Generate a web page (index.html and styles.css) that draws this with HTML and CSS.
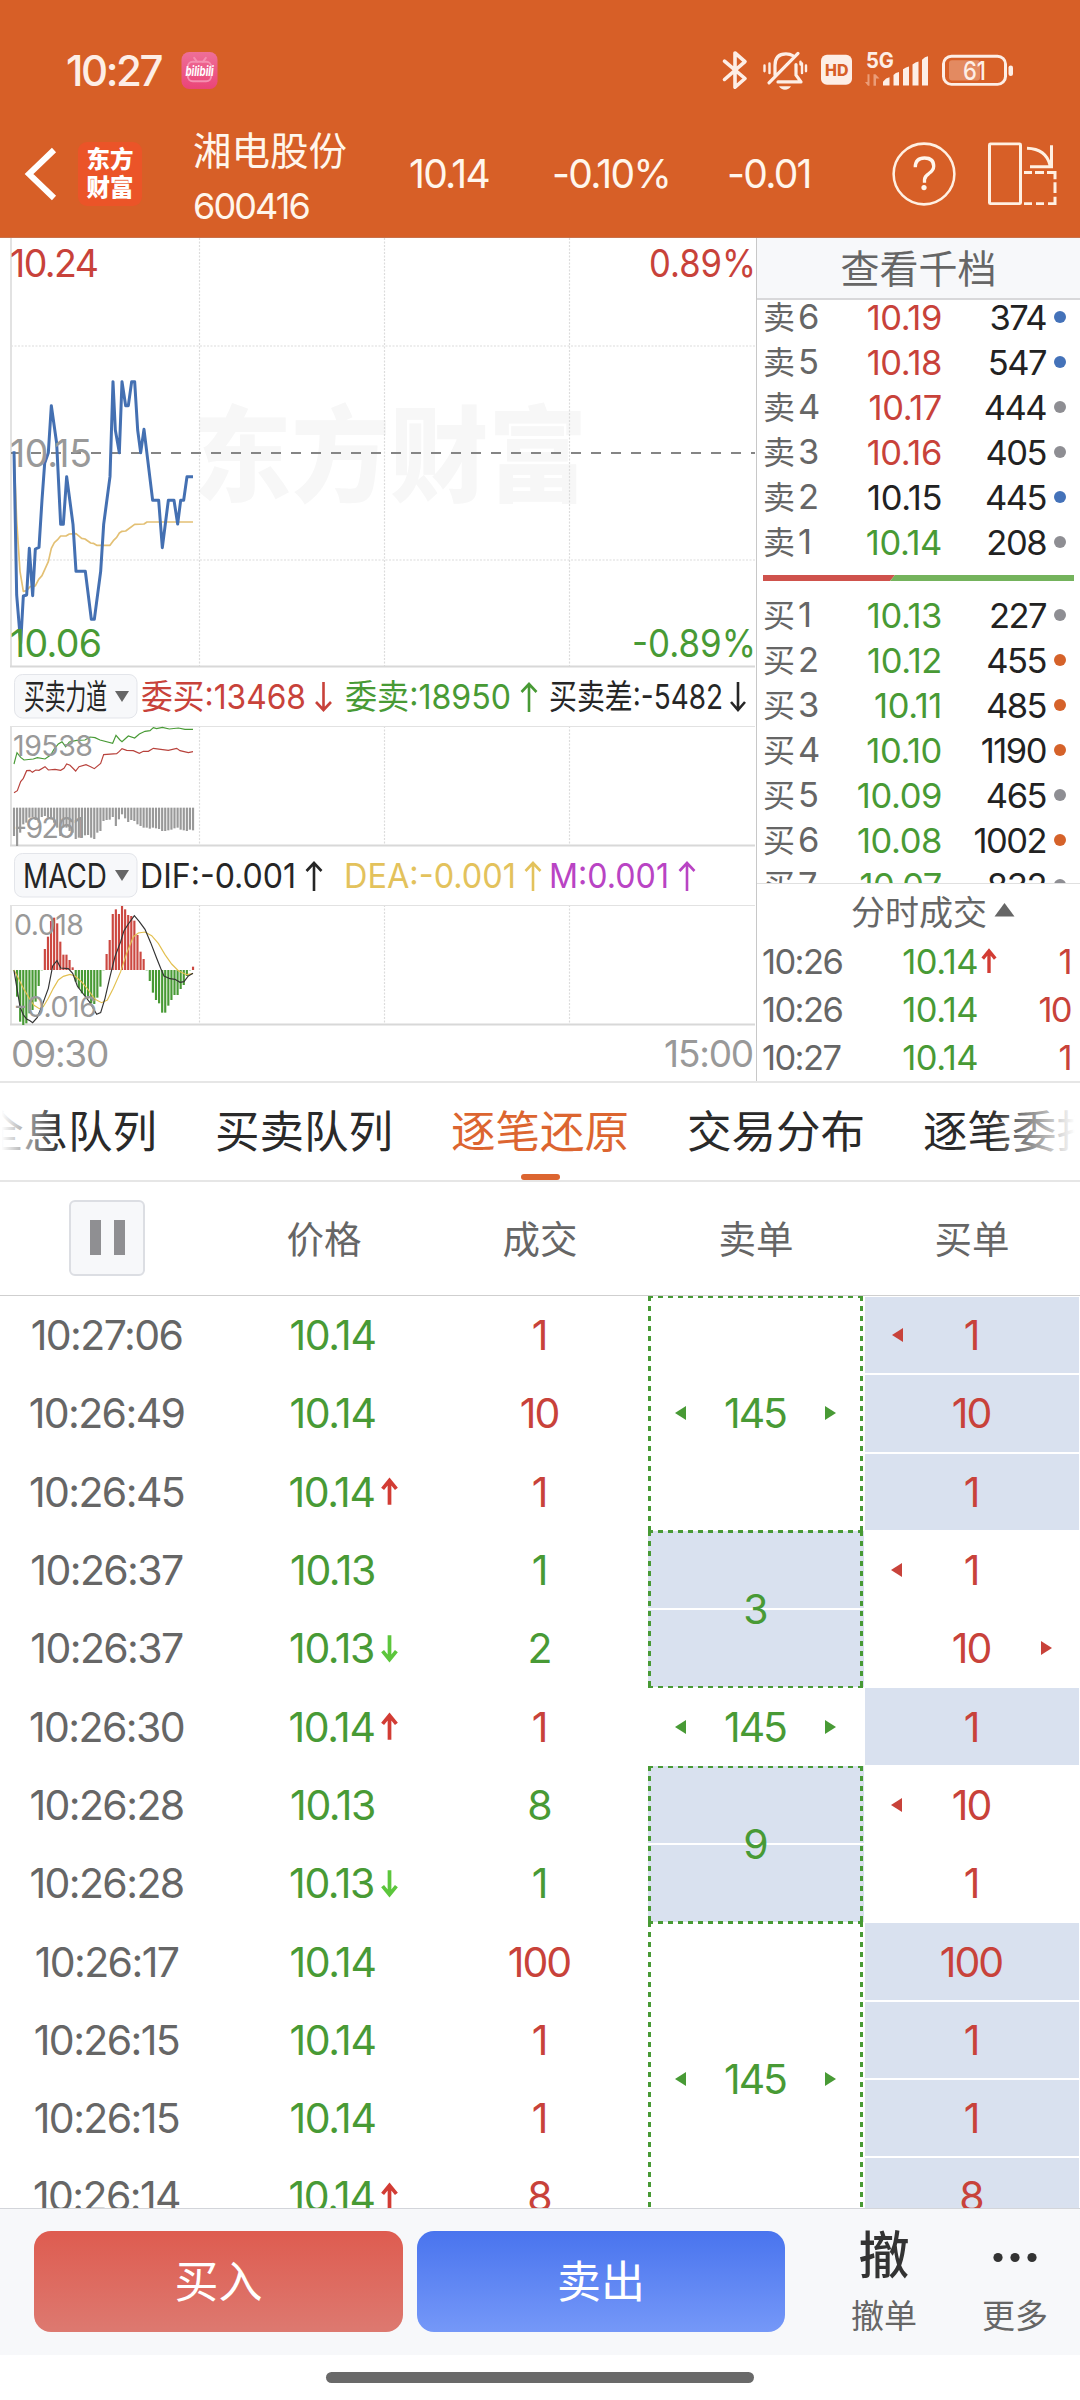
FILE: index.html
```
<!DOCTYPE html>
<html lang="zh-CN">
<head>
    <meta charset="UTF-8">
    <meta name="viewport" content="width=device-width, initial-scale=1.0">
    <title>湘电股份 600416</title>
    <link rel="stylesheet" href="styles.css">
</head>
<body>
    <header class="top">
        <div class="status-bar">
            <span class="clock">10:27</span>
            <svg class="app-badge" width="38" height="37" viewBox="0 0 38 38">
                <defs>
                    <linearGradient id="pink" x1="0" y1="0" x2="0" y2="1">
                        <stop offset="0" stop-color="#ee6f98"/>
                        <stop offset="1" stop-color="#ea4478"/>
                    </linearGradient>
                </defs>
                <rect width="37" height="38" rx="8" fill="url(#pink)"/>
                <g fill="none" stroke="#f58fb0" stroke-width="2" stroke-linecap="round">
                    <rect x="6.500" y="10" width="24" height="20" rx="5"/>
                    <path d="M13 6l3 4M25 6l-3 4"/>
                </g>
                <text x="4" y="25" textLength="29" lengthAdjust="spacingAndGlyphs" class="bili">bilibili</text>
            </svg>
            <svg class="status-icons" width="295" height="42.600" viewBox="720 50 295 44" preserveAspectRatio="none">
                <g fill="none" stroke="#fdeee6" stroke-width="3.600" stroke-linecap="round" stroke-linejoin="round">
                    <path d="M724.500 62.500L745 80.500L735 89.500V54L745 63L724.500 81.500"/>
                    <path d="M775 77V67q0-12 11-12q4 0 7 2M769 85L798 54.500M778 84H801L796 77V66" stroke-width="3.200"/>
                    <path d="M764.500 67v6M769.500 65v10M802 65v10M806 67v6M800.500 63v3" stroke-width="2.400"/>
                </g>
                <path d="M779 88.500h12q-2 3.500-6 3.500t-6-3.500z" fill="#fdeee6"/>
                <rect x="821" y="56" width="31" height="31" rx="6" fill="#fdeee6"/>
                <text x="825" y="77.500" textLength="23.500" lengthAdjust="spacingAndGlyphs" class="hd">HD</text>
                <text x="866" y="70" textLength="28" lengthAdjust="spacingAndGlyphs" class="net">5G</text>
                <path d="M869.500 76v12h-1.500l-3-4h2.500v-8zM873.500 88V76h2l4 4.500h-3.500V88z" fill="#eb9d78"/>
                <path d="M883 87.800v-4q3-4 6.500-4.500v8.500zM893.500 87.800v-11q2-2.500 5.500-3v14zM903 87.800V71q3-2.500 6-3v19.800zM912.500 87.800V66q3-2.500 6-3v24.800zM922 87.800V61q3-3 6-3.500v30.300z" fill="#fdeee6"/>
                <rect x="943.500" y="57.500" width="62" height="29" rx="8" fill="none" stroke="#fdeee6" stroke-width="3"/>
                <rect x="949" y="61.500" width="31" height="21" rx="3" fill="#e38a61"/>
                <rect x="1008.500" y="67" width="4.500" height="11" rx="2.200" fill="#fdeee6"/>
                <text x="963" y="82" textLength="23" lengthAdjust="spacingAndGlyphs" class="battery">61</text>
            </svg>
        </div>
        <div class="nav">
            <svg class="back" width="34" height="58" viewBox="0 0 34 58">
                <path d="M30 5L5 29L30 53" fill="none" stroke="#fff" stroke-width="6"/>
            </svg>
            <div class="logo">东方<br>财富</div>
            <div class="stock">
                <div class="stock-name">湘电股份</div>
                <div class="stock-code">600416</div>
            </div>
            <span class="quote last">10.14</span>
            <span class="quote percent">-0.10%</span>
            <span class="quote change">-0.01</span>
            <svg class="help" width="66" height="66" viewBox="0 0 66 68">
                <circle cx="33" cy="34" r="31.300" fill="none" stroke="#fff0e2" stroke-width="2.600"/>
                <path d="M24 27q0-9.500 9.500-9.500t9.500 8.500q0 4-5 7.500q-4.500 3-4.500 6.500v3" fill="none" stroke="#fff6ec" stroke-width="3.400"/>
                <circle cx="33" cy="48" r="2.700" fill="#fff6ec"/>
            </svg>
            <svg class="rotate" width="70" height="66" viewBox="987 145 70 68" preserveAspectRatio="none">
                <g fill="none" stroke="#fff0e2" stroke-width="3">
                    <rect x="989.500" y="148" width="31" height="61.500" rx="1"/>
                    <path d="M1027 152.500Q1046 153 1050 170M1051.500 149.500V171.500H1030"/>
                    <path d="M1024 177.500h8m3 0h9m3 0h8v7m0 3v11m0 4v7h-7m-4 0h-8m-4 0h-8"/>
                </g>
            </svg>
        </div>
    </header>

    <main class="quote-area">
        <section class="charts">
            <svg class="price-chart" width="757" height="430" viewBox="0 0 757 430">
                <text x="193" y="256" textLength="394" lengthAdjust="spacingAndGlyphs" class="watermark">东方财富</text>
                <path class="grid" d="M11 108H755M11 322H755M199.500 0V429M384.500 0V429M569.500 0V429"/>
                <path class="frame" d="M11 0V429"/>
                <path class="frame-bottom" d="M10 428.500H755"/>
                <path d="M11 215H755" stroke="#858585" stroke-width="2" stroke-dasharray="10 10"/>
                <g transform="translate(0 -8) scale(.33333)" fill="none" stroke-linejoin="round">
                    <path stroke="#e3c074" stroke-width="5" d="M42 668L50 870L60 1024L70 1084L80 1082L90 1070L106 1068L116 1048L126 1037L145 995L154 955L163 938L172 930L182 918L198 918L208 912L228 911L245 925L255 927L272 939L280 940L290 946L330 946L340 932L350 922L358 909L366 904L377 903L404 883L432 882L441 876H579"/>
                    <path stroke="#4470b2" stroke-width="9" d="M42 664L50 1095L62 1240L70 1098L80 1095L88 955L98 1097L106 957L117 952L126 810L134 700L145 668L154 527L170 640L182 883H190L200 740L219 883L228 1024H256L274 1168H283L302 1024L311 883L330 740L339 455L346 600L358 668L366 455L377 527H385L395 455H404L413 600L422 668L432 598L458 811H476L487 953L505 811H522L533 882L542 811H551L561 740H579"/>
                </g>
                <g class="axis">
                    <text x="10" y="39" textLength="89" class="up">10.24</text>
                    <text x="649" y="39" textLength="107" lengthAdjust="spacingAndGlyphs" class="up">0.89%</text>
                    <text x="10" y="229" textLength="82" class="muted">10.15</text>
                    <text x="10" y="419" textLength="92" class="down">10.06</text>
                    <text x="632" y="419" textLength="124" lengthAdjust="spacingAndGlyphs" class="down">-0.89%</text>
                </g>
            </svg>

            <svg class="indicator" width="757" height="58" viewBox="0 0 757 58">
                <rect x="14.500" y="6.500" width="122.500" height="43.500" rx="8" class="picker"/>
                <text x="24" y="41" textLength="83" lengthAdjust="spacingAndGlyphs" class="dark">买卖力道</text>
                <path d="M115 23h14l-7 11z" fill="#666"/>
                <text x="141" y="41" textLength="165" lengthAdjust="spacingAndGlyphs" class="up">委买:13468</text>
                <path class="arrow red" d="M323.500 14V42M316 34l7.500 8l7.500-8"/>
                <text x="345" y="41" textLength="166" lengthAdjust="spacingAndGlyphs" class="down">委卖:18950</text>
                <path class="arrow green" d="M529 44V16M521.500 24l7.500-8l7.500 8"/>
                <text x="549" y="41" textLength="174" lengthAdjust="spacingAndGlyphs" class="dark">买卖差:-5482</text>
                <path class="arrow" d="M738 14V42M731 34l7 8l7-8"/>
            </svg>

            <svg class="sub-chart" width="757" height="121" viewBox="0 0 757 121">
                <path class="grid" d="M199.500 0V119M384.500 0V119M569.500 0V119"/>
                <path class="frame thin" d="M11 .500H755"/>
                <path class="frame" d="M11 0V120"/>
                <path class="frame-bottom" d="M10 119.500H755"/>
                <g transform="translate(0 -66) scale(.33333)" fill="none">
                    <g id="force-bars"></g>
                    <path stroke="#489a35" stroke-width="3.500" d="M42 312L51 278L62 292L72 300L100 297L112 293L135 297L152 285L162 268L175 252L186 245L197 260L208 246L230 241L255 240L270 231L285 233L300 240L338 250L348 226L360 240L366 245L385 228L404 234L418 222L435 214L450 212L460 203L470 206L487 202L508 207L535 204L555 208H579"/>
                    <path stroke="#b8423c" stroke-width="3.500" d="M42 398L52 392L62 365L70 355L80 332L90 331L97 337L107 330L117 331L135 320L145 330L165 328L182 331L192 325L200 312L210 316L227 333L237 320L258 314L272 320L283 326L302 310L311 284L350 281L358 274L366 266L380 271L400 272L418 280L430 274L445 274L460 265L505 271L530 265L540 272L565 278L579 275"/>
                </g>
                <g class="axis small">
                    <text x="13" y="30" textLength="80" class="muted">19538</text>
                    <text x="14" y="112" textLength="71" class="muted">-9261</text>
                </g>
            </svg>

            <svg class="indicator" width="757" height="58" viewBox="0 0 757 58">
                <rect x="14.500" y="6.500" width="122.500" height="43.500" rx="8" class="picker"/>
                <text x="23" y="41" textLength="84" lengthAdjust="spacingAndGlyphs" class="dark">MACD</text>
                <path d="M115 23h14l-7 11z" fill="#666"/>
                <text x="140" y="41" textLength="156" lengthAdjust="spacingAndGlyphs" class="dark">DIF:-0.001</text>
                <path class="arrow" d="M314 44V16M306.500 24l7.500-8l7.500 8"/>
                <text x="344" y="41" textLength="172" lengthAdjust="spacingAndGlyphs" class="gold">DEA:-0.001</text>
                <path class="arrow yellow" d="M533 44V16M525.500 24l7.500-8l7.500 8"/>
                <text x="549" y="41" textLength="120" lengthAdjust="spacingAndGlyphs" class="purple">M:0.001</text>
                <path class="arrow violet" d="M687 44V16M679.500 24l7.500-8l7.500 8"/>
            </svg>

            <svg class="sub-chart" width="757" height="121" viewBox="0 0 757 121">
                <path class="grid" d="M199.500 0V119M384.500 0V119M569.500 0V119"/>
                <path class="frame thin" d="M11 .500H755"/>
                <path class="frame" d="M11 0V120"/>
                <path class="frame-bottom" d="M10 119.500H755"/>
                <g transform="translate(0 -245) scale(.33333)" fill="none">
                    <g id="macd-bars"></g>
                    <path stroke="#e3c050" stroke-width="3.500" d="M42 930L55 955L70 985L88 1015L102 1036L118 1046L130 1040L145 1015L160 985L175 960L190 949L210 943L225 948L245 966L265 990L285 1018L305 1028L322 1020L340 985L362 935L380 880L400 830L415 819L435 816L455 827L475 850L495 884L515 912L535 932L560 944L579 941"/>
                    <path stroke="#333" stroke-width="3.500" d="M42 932L50 980L60 1040L70 1065L80 1077L90 1082L98 1088L112 1072L125 1040L145 985L158 918L171 902L182 924L205 926L218 940L232 978L250 1002L270 1028L290 1063L302 1058L315 1015L330 950L345 890L362 845L372 812L385 792L403 767L418 785L435 808L452 848L470 895L482 925L492 948L510 956L525 958L540 967L552 965L565 948L579 940"/>
                </g>
                <g class="axis small">
                    <text x="14" y="30" textLength="70" class="muted">0.018</text>
                    <text x="14" y="112" textLength="83" class="muted">-0.016</text>
                </g>
            </svg>
            <div class="time-axis"><span>09:30</span><span>15:00</span></div>
        </section>

        <aside class="order-book">
            <div class="book-title">查看千档</div>
            <div class="levels">
                <div id="asks" class="level-group"></div>
                <svg class="ratio" width="311" height="6" viewBox="0 0 311 6">
                    <path d="M0 0H132L127 6H0z" fill="#cf524c"/>
                    <path d="M132 0H311V6H127z" fill="#74b35c"/>
                </svg>
                <div id="bids" class="level-group"></div>
            </div>
            <div class="ticks">
                <div class="ticks-title">分时成交<svg width="21" height="15" viewBox="0 0 21 15"><path d="M10.500 0L20.500 13.500H.500z" fill="#666"/></svg></div>
                <div id="ticks"></div>
            </div>
        </aside>
    </main>

    <nav class="tabs">
        <span class="tab">全息队列</span>
        <span class="tab">买卖队列</span>
        <span class="tab active">逐笔还原</span>
        <span class="tab">交易分布</span>
        <span class="tab">逐笔委托</span>
    </nav>

    <section class="trades">
        <div class="trades-head">
            <button class="pause" type="button"><i></i><i></i></button>
            <span>价格</span>
            <span>成交</span>
            <span>卖单</span>
            <span>买单</span>
        </div>
        <div class="trades-body" id="trades"></div>
    </section>

    <footer class="bottom">
        <button class="trade-btn buy" type="button">买入</button>
        <button class="trade-btn sell" type="button">卖出</button>
        <div class="action"><b>撤</b><span>撤单</span></div>
        <div class="action more">
            <svg width="44" height="50" viewBox="0 0 44 50"><g fill="#333"><circle cx="5" cy="25" r="4.600"/><circle cx="22" cy="25" r="4.600"/><circle cx="39" cy="25" r="4.600"/></g></svg>
            <span>更多</span>
        </div>
    </footer>
    <div class="home-bar"><i></i></div>

    <script src="script.js"></script>
</body>
</html>
```
FILE: styles.css
```
* {
    box-sizing: border-box;
}

body {
    margin: 0;
    width: 1080px;
    height: 2400px;
    display: flex;
    flex-direction: column;
    overflow: hidden;
    background-color: #fff;
    color: #222;
    font-family: Inter, "Noto Sans CJK SC", sans-serif;
}

svg {
    display: block;
    flex: none;
}

button {
    border: none;
    padding: 0;
    font-family: inherit;
}

.up { color: #c8423a; fill: #c8423a; }
.down { color: #489a35; fill: #489a35; }
.muted { color: #999; fill: #999; }
.dark { color: #262626; fill: #262626; }
.gold { fill: #e3c25c; }
.purple { fill: #b944c4; }

/* header */
.top {
    height: 238px;
    flex: none;
    background-color: #d75f27;
    border-bottom: 1px solid #c9714a;
    color: #fff6ec;
}

.status-bar {
    height: 120px;
    padding: 20px 65px 0 66px;
    display: flex;
    align-items: center;
}

.clock {
    width: 115px;
    font-size: 42px;
    font-weight: 500;
    letter-spacing: -2.4px;
    color: #fdeee6;
}

.status-icons {
    margin-left: auto;
}

.bili {
    font: italic 700 14px Inter, sans-serif;
    fill: #fff;
}

.hd {
    font: 800 16px Inter, sans-serif;
    fill: #d75f27;
}

.net {
    font: 700 22px Inter, sans-serif;
    fill: #fdeee6;
}

.battery {
    font: 500 27px Inter, sans-serif;
    fill: #fdeee6;
}

.nav {
    height: 107px;
    display: flex;
    align-items: center;
    padding-left: 24px;
}

.logo {
    width: 64px;
    height: 64px;
    margin-left: 20px;
    padding-top: 4px;
    border-radius: 9px;
    background-color: #eb5428;
    color: #fff;
    font-size: 23.500px;
    font-weight: 900;
    line-height: 28px;
    text-align: center;
}

.stock {
    width: 216px;
    margin: 8px 0 0 51px;
    white-space: nowrap;
}

.stock-name {
    font-size: 38.500px;
    line-height: 57px;
}

.stock-code {
    font-size: 36px;
    line-height: 53px;
    letter-spacing: -1.9px;
}

.quote {
    font-size: 39px;
    letter-spacing: -1.7px;
}

.last { width: 143px; }
.percent { width: 175px; }
.change { width: 164px; }

.rotate {
    margin-left: 30px;
}

/* charts */
.quote-area {
    height: 845px;
    flex: none;
    display: flex;
    border-bottom: 2px solid #e6e6e6;
}

.charts {
    width: 756px;
    display: flex;
    flex-direction: column;
    overflow: hidden;
}

.watermark {
    font-size: 104px;
    font-weight: 900;
    fill: #f7f7f7;
}

.grid {
    stroke: #dcdcdc;
    stroke-width: 1.200;
    stroke-dasharray: 2 1.500;
    fill: none;
}

.frame {
    stroke: #e2e2e2;
    stroke-width: 2;
}

.frame.thin {
    stroke-width: 1;
}

.frame-bottom {
    stroke: #d8d8d8;
    stroke-width: 2;
}

.axis {
    font-size: 37.500px;
}

.axis.small {
    font-size: 28.500px;
}

.indicator {
    font-size: 34px;
}

.picker {
    fill: #f7f8fa;
    stroke: #e3e5ea;
}

.arrow {
    fill: none;
    stroke: #262626;
    stroke-width: 2.600;
}

.arrow.red { stroke: #c8423a; }
.arrow.green { stroke: #489a35; }
.arrow.yellow { stroke: #e3c25c; }
.arrow.violet { stroke: #b944c4; }

.time-axis {
    display: flex;
    justify-content: space-between;
    padding: 1px 3px 0 11px;
    font-size: 37px;
    line-height: 54px;
    letter-spacing: -1.2px;
    color: #999;
}

/* order book */
.order-book {
    width: 324px;
    border-left: 1px solid #c8c8c8;
    display: flex;
    flex-direction: column;
}

.book-title {
    height: 62px;
    border-bottom: 2px solid #d8d8da;
    background-color: #f7f8fa;
    color: #666;
    font-size: 39px;
    line-height: 62px;
    text-align: center;
}

.levels {
    height: 586px;
    overflow: hidden;
    border-bottom: 1px solid #e0e0e0;
    display: flex;
    flex-direction: column;
}

.level-group {
    flex: none;
}

#asks {
    margin-top: -6px;
}

.ratio {
    margin: 11px 0 11px 6px;
}

.level {
    height: 45px;
    display: grid;
    grid-template-columns: 71px 108px 104px 12px;
    align-items: center;
    padding-left: 6px;
    font-size: 34.500px;
    line-height: 45px;
    letter-spacing: -1.5px;
    text-align: right;
}

.level .name {
    text-align: left;
    font-size: 32px;
    letter-spacing: 0;
    color: #666;
}

.level .name em {
    font-style: normal;
    font-size: 34.500px;
    margin-left: 3px;
}

.level .price {
    letter-spacing: -.4px;
}

.dot {
    width: 12px;
    height: 12px;
    margin-left: 8px;
    border-radius: 50%;
    background-color: #8e8e93;
}

.dot.big-sell { background-color: #4472b9; }
.dot.big-buy { background-color: #d5622a; }

.ticks-title {
    height: 52px;
    display: flex;
    align-items: center;
    justify-content: center;
    padding-left: 29px;
    font-size: 34px;
    color: #666;
}

.ticks-title svg {
    margin-left: 7px;
}

.ticks {
    padding-bottom: 1px;
}

.tick {
    height: 48px;
    display: grid;
    grid-template-columns: 90px 126px 26px 67px;
    align-items: center;
    padding-left: 5px;
    padding-top: 2px;
    font-size: 34.500px;
    letter-spacing: -1.6px;
    text-align: right;
}

.tick .time {
    text-align: left;
    color: #666;
}

.tick .down {
    letter-spacing: -.5px;
}

.tick svg {
    margin-left: 2px;
}

/* tabs */
.tabs {
    position: relative;
    height: 99px;
    flex: none;
    display: flex;
    gap: 58px;
    margin-left: -21px;
    border-bottom: 2px solid #e6e6e6;
    overflow: hidden;
    color: #2a2a2a;
}

.tab {
    position: relative;
    width: 178px;
    flex: none;
    font-size: 44.500px;
    line-height: 99px;
    white-space: nowrap;
}

.tab.active {
    color: #dc6530;
}

.tab.active::after {
    content: "";
    position: absolute;
    left: 70px;
    bottom: 0;
    width: 39px;
    height: 6px;
    border-radius: 3px;
    background-color: #dc6530;
}

.tabs::before,
.tabs::after {
    content: "";
    position: absolute;
    top: 0;
    bottom: 0;
    width: 70px;
    z-index: 1;
}

.tabs::before {
    left: 12px;
    background: linear-gradient(to right, #fff 15%, rgba(255, 255, 255, 0));
}

.tabs::after {
    right: 0;
    width: 90px;
    background: linear-gradient(to left, #fff 5%, rgba(255, 255, 255, 0));
}

/* trades */
.trades {
    height: 1026px;
    flex: none;
    overflow: hidden;
}

.trades-head {
    height: 114px;
    display: grid;
    grid-template-columns: repeat(5, 216px);
    align-items: center;
    justify-items: center;
    padding-bottom: 4px;
    border-bottom: 1px solid #cfcfcf;
    font-size: 37.500px;
    color: #666;
}

.pause {
    width: 76px;
    height: 76px;
    margin: 2px 2px 0 0;
    display: flex;
    align-items: center;
    justify-content: center;
    gap: 13px;
    border: 2px solid #dcdee3;
    border-radius: 6px;
    background-color: #f7f8fa;
}

.pause i {
    width: 11px;
    height: 35px;
    background-color: #8f8f92;
}

.trades-body {
    display: grid;
    grid-template-columns: repeat(5, 216px);
    grid-auto-rows: 78.300px;
    font-size: 41px;
    letter-spacing: -2px;
}

.cell {
    position: relative;
    display: flex;
    align-items: center;
    justify-content: center;
    grid-column: 1;
    padding-right: 2px;
}

.cell.time {
    color: #666;
    padding-right: 3px;
    letter-spacing: -1.600px;
}

.cell.price {
    grid-column: 2;
    padding: 0 0 0 17px;
    letter-spacing: -1.400px;
}

.cell.volume { grid-column: 3; }
.cell.ask { grid-column: 4; }
.cell.bid { grid-column: 5; }

.price svg {
    margin: 0 -22px 0 7px;
}

.bid.shade {
    margin: 1px;
    background-color: #d9e1ef;
}

.ask.shade {
    background: linear-gradient(#fff, #fff) 0 50% / 100% 2px no-repeat #d9e1ef;
}

/* dashed frame round one merged sell order */
.ask.boxed::after {
    content: "";
    position: absolute;
    inset: 0 1px -1px 0;
    background:
        repeating-linear-gradient(to right, #489a35 0 5px, transparent 5px 10px) 0 0 / 100% 2px no-repeat,
        repeating-linear-gradient(to right, #489a35 0 5px, transparent 5px 10px) 0 100% / 100% 2px no-repeat,
        repeating-linear-gradient(to bottom, #489a35 0 5px, transparent 5px 10px) 0 0 / 3px 100% no-repeat,
        repeating-linear-gradient(to bottom, #489a35 0 5px, transparent 5px 10px) 100% 0 / 3px 100% no-repeat;
}

.mark {
    position: absolute;
    top: 50%;
    margin-top: -7px;
    border: 7.500px solid transparent;
}

.mark.left {
    left: 27px;
    border-right: 11px solid currentColor;
    border-left: none;
}

.mark.right {
    right: 28px;
    border-left: 11px solid currentColor;
    border-right: none;
}

/* footer */
.bottom {
    height: 147px;
    flex: none;
    display: flex;
    align-items: flex-start;
    padding: 22px 0 0 34px;
    border-top: 1px solid #d3d5da;
    background-color: #f7f8fa;
}

.trade-btn {
    width: 369px;
    height: 101px;
    margin-right: 14px;
    border-radius: 17px;
    color: #fff;
    font-size: 44px;
    line-height: 98px;
}

.trade-btn.buy { background: linear-gradient(#de5c50, #dd7970); }
.trade-btn.sell { width: 368px; background: linear-gradient(#4974ee, #7598f8); }

.action {
    width: 130px;
    margin-left: 20px;
    display: flex;
    flex-direction: column;
    align-items: center;
    color: #666;
    font-size: 33px;
}

.action b {
    height: 53px;
    font-size: 51px;
    font-weight: 500;
    line-height: 50px;
    color: #333;
}

.action span {
    line-height: 64px;
}

.action.more {
    margin-left: 1px;
}

.action.more svg {
    height: 53px;
}

.home-bar {
    height: 45px;
    display: flex;
    justify-content: center;
    padding-top: 17px;
}

.home-bar i {
    width: 428px;
    height: 11px;
    border-radius: 6px;
    background-color: #696969;
}
```
FILE: script.js
```
const UP = 'up';
const DOWN = 'down';

// name, price, price class, volume, dot class
const asks = [
    ['6', '10.19', UP, 374, 'big-sell'],
    ['5', '10.18', UP, 547, 'big-sell'],
    ['4', '10.17', UP, 444, ''],
    ['3', '10.16', UP, 405, ''],
    ['2', '10.15', '', 445, 'big-sell'],
    ['1', '10.14', DOWN, 208, '']
];
const bids = [
    ['1', '10.13', DOWN, 227, ''],
    ['2', '10.12', DOWN, 455, 'big-buy'],
    ['3', '10.11', DOWN, 485, 'big-buy'],
    ['4', '10.10', DOWN, 1190, 'big-buy'],
    ['5', '10.09', DOWN, 465, ''],
    ['6', '10.08', DOWN, 1002, 'big-buy'],
    ['7', '10.07', DOWN, 832, '']
];
const ticks = [
    ['10:26', '10.14', 'up', 1],
    ['10:26', '10.14', '', 10],
    ['10:27', '10.14', '', 1]
];

// time, price, move, volume, volume class, buy order, buy shaded, buy marks
const trades = [
    ['10:27:06', '10.14', '', 1, UP, 1, true, 'left'],
    ['10:26:49', '10.14', '', 10, UP, 10, true, ''],
    ['10:26:45', '10.14', 'up', 1, UP, 1, true, ''],
    ['10:26:37', '10.13', '', 1, DOWN, 1, false, 'left'],
    ['10:26:37', '10.13', 'down', 2, DOWN, 10, false, 'right'],
    ['10:26:30', '10.14', 'up', 1, UP, 1, true, ''],
    ['10:26:28', '10.13', '', 8, DOWN, 10, false, 'left'],
    ['10:26:28', '10.13', 'down', 1, DOWN, 1, false, ''],
    ['10:26:17', '10.14', '', 100, UP, 100, true, ''],
    ['10:26:15', '10.14', '', 1, UP, 1, true, ''],
    ['10:26:15', '10.14', '', 1, UP, 1, true, ''],
    ['10:26:14', '10.14', 'up', 8, UP, 8, true, '']
];

// first row, rows spanned, sell order, classes
const askOrders = [
    [1, 3, 145, 'boxed'],
    [4, 2, 3, 'boxed shade'],
    [6, 1, 145, ''],
    [7, 2, 9, 'boxed shade'],
    [9, 4, 145, 'boxed']
];

function arrow(move, w, h) {
    if (!move) return '';
    const d = move === 'up' ? 'M8 26V3M1.500 11L8 3L14.500 11' : 'M8 1V24M1.500 16L8 24L14.500 16';
    const color = move === 'up' ? '#d23c34' : '#5cc63c';
    return `<svg width="${w}" height="${h}" viewBox="0 0 16 27"><path d="${d}" fill="none" stroke="${color}" stroke-width="3.500"/></svg>`;
}

function renderLevels(id, label, rows) {
    document.getElementById(id).innerHTML = rows.map(([n, price, cls, volume, dot]) =>
        `<div class="level"><span class="name">${label}<em>${n}</em></span><span class="price ${cls}">${price}</span><span>${volume}</span><i class="dot ${dot}"></i></div>`
    ).join('');
}

function renderTicks() {
    document.getElementById('ticks').innerHTML = ticks.map(([time, price, move, volume]) =>
        `<div class="tick"><span class="time">${time}</span><span class="down">${price}</span><span>${arrow(move, 18, 26)}</span><span class="up">${volume}</span></div>`
    ).join('');
}

function renderTrades() {
    let html = '';
    trades.forEach(([time, price, move, volume, cls, bid, shade, mark], i) => {
        const row = `style="grid-row:${i + 1}"`;
        html += `<div class="cell time" ${row}>${time}</div>`;
        html += `<div class="cell price down" ${row}>${price}${arrow(move, 17, 29)}</div>`;
        html += `<div class="cell volume ${cls}" ${row}>${volume}</div>`;
        html += `<div class="cell bid up ${shade ? 'shade' : ''}" ${row}>${mark ? `<i class="mark ${mark}"></i>` : ''}${bid}</div>`;
    });
    askOrders.forEach(([start, span, order, cls]) => {
        const marks = order === 145 ? '<i class="mark left"></i><i class="mark right"></i>' : '';
        html += `<div class="cell ask down ${cls}" style="grid-row:${start} / span ${span}">${marks}${order}</div>`;
    });
    document.getElementById('trades').innerHTML = html;
}

const force = [85, 115, 75, 50, 45, 30, 28, 37, 45, 28, 25, 30, 35, 45, 60, 85, 60, 60, 70, 75, 94, 90, 90, 83, 82, 90, 94, 75, 70, 40,
    37, 36, 28, 55, 35, 20, 32, 43, 37, 40, 50, 55, 60, 60, 63, 60, 62, 64, 70, 70, 68, 66, 62, 60, 66, 68, 70, 66, 68];
const macd = [-2, -80, -155, -165, -160, -130, -120, -95, -48, -1, 63, 100, 147, 157, 140, 85, 46, 46, 30, 8, -35, -55, -70, -78, -85,
    -100, -102, -83, -50, -1, 48, 90, 168, 182, 168, 192, 182, 165, 162, 148, 105, 55, 33, -1, -33, -68, -90, -100, -128, -128, -107,
    -90, -75, -75, -57, -45, -18, -1, 10];

// negative values hang below the base line
function drawBars(id, values, base, color) {
    document.getElementById(id).innerHTML = values.map((v, i) =>
        `<path d="M${(42 + i * 9.260).toFixed(1)} ${base}v${-v}" stroke="${color(v)}" stroke-width="6.500"/>`
    ).join('');
}

renderLevels('asks', '卖', asks);
renderLevels('bids', '买', bids);
renderTicks();
renderTrades();
drawBars('force-bars', force.map(v => -v), 443, () => '#999');
drawBars('macd-bars', macd, 930, v => v > 0 ? '#cc4841' : '#489a35');
```
